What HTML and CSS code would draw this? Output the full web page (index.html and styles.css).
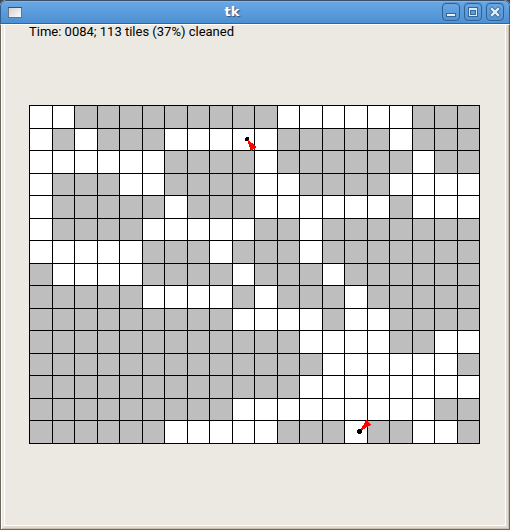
FILE: index.html
```html
<!DOCTYPE html>
<html lang="en">
<head>
<meta charset="utf-8">
<title>tk</title>
<link rel="stylesheet" href="styles.css">
</head>
<body>
<div class="window">
  <header class="titlebar">
    <svg class="app-icon" width="14" height="11" viewBox="0 0 14 11" shape-rendering="crispEdges" aria-hidden="true">
      <defs>
        <linearGradient id="pane" x1="0" y1="0" x2="1" y2="1">
          <stop offset="0" stop-color="#d2d2d2"/>
          <stop offset="1" stop-color="#fcfcfc"/>
        </linearGradient>
      </defs>
      <path d="M0 0h14v11H0z" fill="#6f7377"/>
      <path d="M0 0h14v1H0z" fill="#38536c"/>
      <path d="M1 1h12v9H1z" fill="url(#pane)"/>
    </svg>
    <h1 class="title">tk</h1>
    <div class="controls">
      <button class="control" type="button" aria-label="Minimize">
        <svg width="16" height="16" viewBox="0 0 16 16" shape-rendering="crispEdges" aria-hidden="true">
          <path d="M3 9h10v4H3z" fill="#346698"/>
          <path d="M4 10h8v2H4z" fill="#e4f0fb"/>
        </svg>
      </button>
      <button class="control" type="button" aria-label="Maximize">
        <svg width="16" height="16" viewBox="0 0 16 16" shape-rendering="crispEdges" aria-hidden="true">
          <path d="M3 3h10v10H3z" fill="#346698"/>
          <path d="M4 4h8v8H4z" fill="#dcebf9"/>
          <path d="M5 6h6v5H5z" fill="#346698"/>
          <path d="M6 7h4v3H6z" fill="#5e9cdb"/>
        </svg>
      </button>
      <button class="control" type="button" aria-label="Close">
        <svg width="16" height="16" viewBox="0 0 16 16" aria-hidden="true">
          <path d="M5 5l6 6M11 5l-6 6" stroke="#346698" stroke-width="4" stroke-linecap="square"/>
          <path d="M5 5l6 6M11 5l-6 6" stroke="#e4f0fb" stroke-width="2.4" stroke-linecap="square"/>
        </svg>
      </button>
    </div>
  </header>
  <main class="content">
    <p class="status">Time: 0084; 113 tiles (37%) cleaned</p>
    <svg class="room" width="451" height="339" viewBox="0 0 451 339" shape-rendering="crispEdges" role="img" aria-label="Room floor with two robots">
      <g id="tiles"></g>
      <g>
        <path class="heading" d="M218 34L228 42L222 46Z"/>
        <circle class="robot" cx="218" cy="34" r="2"/>
      </g>
      <g>
        <path class="heading" d="M331 326L337 315L342 320Z"/>
        <circle class="robot" cx="330.5" cy="326.5" r="2.5"/>
      </g>
    </svg>
  </main>
</div>
<script src="room.js"></script>
</body>
</html>
```
FILE: styles.css
```css
* {
  box-sizing: border-box;
}

body {
  margin: 0;
  background: #3f4a55;
  font-family: Roboto, "Liberation Sans", sans-serif;
}

.window {
  display: flex;
  flex-direction: column;
  min-height: 100vh;
  border-radius: 6px 6px 0 0;
  overflow: hidden;
  background: #ece9e2;
}

.titlebar {
  display: flex;
  align-items: center;
  height: 24px;
  padding: 0 5px 0 7px;
  border: 1px solid #2f5f90;
  border-top-color: #3a5068;
  border-bottom-color: #336699;
  border-radius: 6px 6px 0 0;
  background: linear-gradient(#6aa8e6, #4c90d1);
  box-shadow: inset 0 1px #7fb5ea;
}

.app-icon {
  display: block;
}

.title {
  flex: 1;
  margin: 0;
  color: #fff;
  font: bold 13px/20px "DejaVu Sans", sans-serif;
  text-align: center;
  text-shadow: 1px 1px 1px #31547a;
}

.controls {
  display: flex;
  gap: 4px;
}

.control {
  display: flex;
  width: 18px;
  height: 18px;
  padding: 0;
  border: 1px solid #2f6194;
  border-radius: 4px;
  background: linear-gradient(#6aa6e3, #5093d5);
  box-shadow: 0 0 0 1px #5c99d6;
}

.content {
  flex: 1;
  padding: 0 29px 0 28px;
  border: 1px solid #6e655b;
  border-top: 1px solid #fff;
  box-shadow:
    inset 1px 0 #fff,
    inset -1px -1px #c9bfb1,
    inset 3px 0 #ece9e2,
    inset -3px -3px #e2dace,
    inset 4px -4px #fff,
    inset -4px -4px #fff;
}

.status {
  margin: 0;
  color: #000;
  font-size: 13px;
  line-height: 13px;
}

.room {
  display: block;
  max-width: 100%;
  margin: 67px auto 24px;
}

.tile {
  fill: #bebebe;
  stroke: #000;
  stroke-width: 1px;
}

.tile.clean {
  fill: #fff;
}

.robot {
  fill: #000;
}

.heading {
  fill: #f00;
}
```
FILE: room.js
```js
// Floor map: "#" is a cleaned tile, "." is a dirty one.
const floor = [
  "##.........######...",
  "#.#...#####.....#...",
  "######....#......#..",
  "#...##....##....####",
  "#.....#...######.###",
  "#....#####..#.......",
  "#####...#...#.......",
  ".####....#...#......",
  ".....####.#...#.....",
  ".........####.##....",
  "............####..##",
  ".............######.",
  "............########",
  ".........#########..",
  "......#####...#..##."
];

const pitch = 22.5;
const edge = (index) => Math.ceil(index * pitch);
const tiles = document.getElementById("tiles");

floor.forEach((line, row) => {
  [...line].forEach((mark, col) => {
    const tile = document.createElementNS("http://www.w3.org/2000/svg", "rect");
    tile.setAttribute("class", mark === "#" ? "tile clean" : "tile");
    tile.setAttribute("x", edge(col) + 0.5);
    tile.setAttribute("y", edge(row) + 0.5);
    tile.setAttribute("width", edge(col + 1) - edge(col));
    tile.setAttribute("height", edge(row + 1) - edge(row));
    tiles.append(tile);
  });
});
```
